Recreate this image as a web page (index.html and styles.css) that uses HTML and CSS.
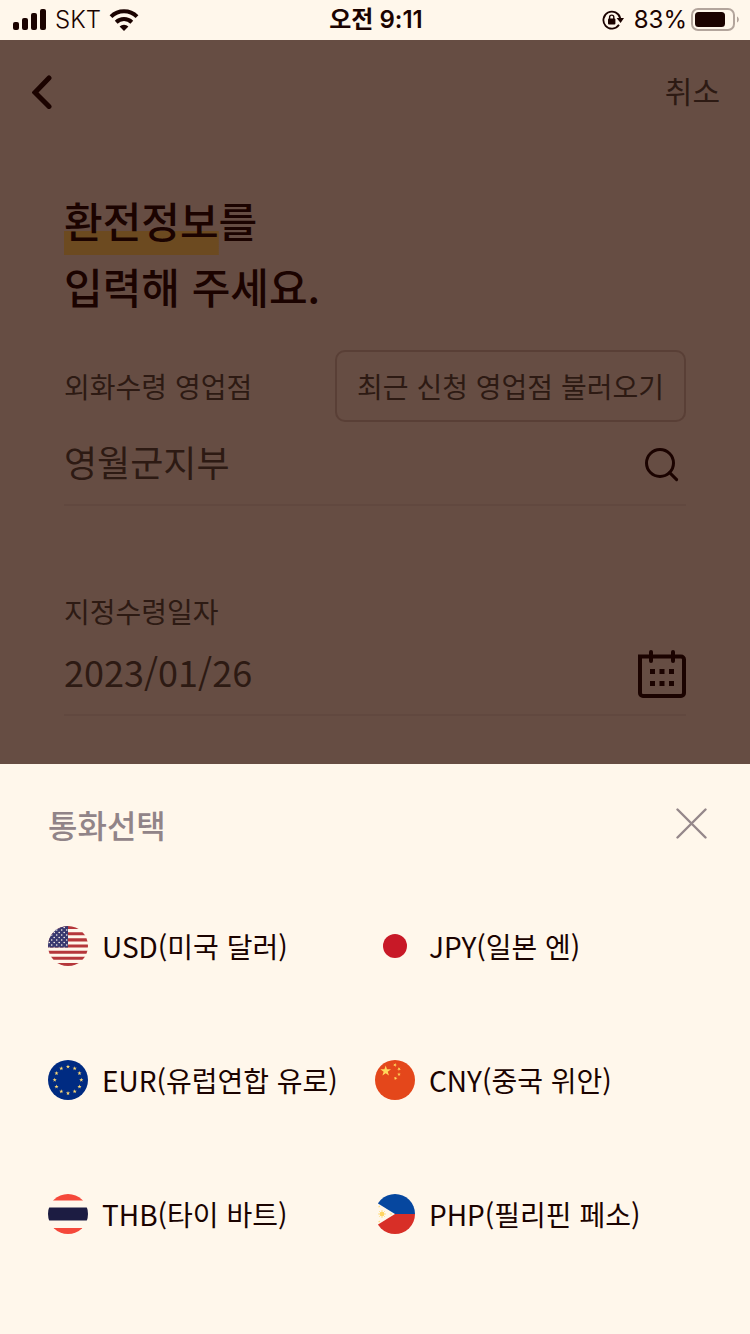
FILE: index.html
```html
<!DOCTYPE html>
<html lang="ko">
<head>
<meta charset="utf-8">
<meta name="viewport" content="width=device-width, initial-scale=1">
<title>환전정보 입력</title>
<link rel="stylesheet" href="styles.css">
</head>
<body>
<div class="status">
  <div class="status-side">
    <svg class="signal" width="34" height="22" viewBox="0 0 34 22" fill="currentColor" aria-hidden="true">
      <rect x="0" y="13" width="6" height="8" rx="2"/><rect x="9" y="9" width="6" height="12" rx="2"/><rect x="18" y="4" width="6" height="17" rx="2"/><rect x="27" y="0" width="6" height="21" rx="2"/>
    </svg>
    <span class="carrier">SKT</span>
    <svg width="30" height="22" viewBox="0 0 30 22" aria-hidden="true">
      <path d="M2 7.600a18.500 18.500 0 0 1 26 0" fill="none" stroke="currentColor" stroke-width="4"/>
      <path d="M7.200 13.200a11.200 11.200 0 0 1 15.600 0" fill="none" stroke="currentColor" stroke-width="4"/>
      <path d="M15 22l-4.400-4.600a6.400 6.400 0 0 1 8.800 0z" fill="currentColor"/>
    </svg>
  </div>
  <div class="clock">오전 9:11</div>
  <div class="status-side status-right">
    <svg width="22" height="20" viewBox="0 0 22 20" aria-hidden="true">
      <path d="M17 14.800a8.500 8.500 0 1 1 1.200-6.600" fill="none" stroke="currentColor" stroke-width="1.800"/>
      <path d="M14.600 8h7.400l-3.400 5z" fill="currentColor"/>
      <rect x="6" y="8.600" width="7.400" height="5.800" rx="1" fill="currentColor"/>
      <path d="M7.600 9V7.200a2.100 2.100 0 0 1 4.200 0V9" fill="none" stroke="currentColor" stroke-width="1.400"/>
    </svg>
    <span class="charge">83%</span>
    <svg width="48" height="24" viewBox="0 0 48 24" aria-hidden="true">
      <rect x="1" y="1" width="42" height="21" rx="6" fill="none" stroke="#b3a59c" stroke-width="2"/>
      <rect x="4" y="4" width="30" height="15" rx="3.500" fill="currentColor"/>
      <path d="M46 8.500c2.400 1 2.400 5 0 6z" fill="#b3a59c"/>
    </svg>
  </div>
</div>

<main class="page">
  <header class="topbar">
    <button class="icon-button" type="button" aria-label="뒤로">
      <svg width="20" height="34" viewBox="0 0 20 34" fill="none" stroke="currentColor" stroke-width="5" stroke-linecap="round"><path d="M17 3L3 17.500 17 31.500"/></svg>
    </button>
    <button class="cancel" type="button">취소</button>
  </header>
  <form class="form">
    <h1 class="title"><span class="mark">환전정보</span>를<br>입력해 주세요.</h1>
    <div class="label-row">
      <label class="label" for="branch">외화수령 영업점</label>
      <button class="recent" type="button">최근 신청 영업점 불러오기</button>
    </div>
    <div class="field">
      <input class="input" id="branch" type="text" value="영월군지부">
      <button class="icon-button" type="button" aria-label="검색">
        <svg width="48" height="48" viewBox="0 0 48 48" fill="none" stroke="currentColor" stroke-width="3" stroke-linecap="round"><circle cx="22" cy="23" r="13.500"/><path d="M31.600 32.600l7 7"/></svg>
      </button>
    </div>
    <label class="label date-label" for="date">지정수령일자</label>
    <div class="field">
      <input class="input" id="date" type="text" value="2023/01/26">
      <button class="icon-button" type="button" aria-label="날짜 선택">
        <svg width="48" height="48" viewBox="0 0 48 48" fill="none" stroke="currentColor" stroke-width="4"><path d="M2 6.500h41a3 3 0 0 1 3 3v33.500a3 3 0 0 1-3 3H5a3 3 0 0 1-3-3z"/><path d="M13 2v9M35 2v9" stroke-linecap="round"/><path d="M12 21.500h24M12 33.500h24" stroke-width="5" stroke-dasharray="5 4.500"/></svg>
      </button>
    </div>
  </form>
</main>

<section class="sheet" role="dialog" aria-labelledby="sheet-title">
  <header class="sheet-head">
    <h2 class="sheet-title" id="sheet-title">통화선택</h2>
    <button class="icon-button close" type="button" aria-label="닫기">
      <svg width="32" height="32" viewBox="0 0 32 32" fill="none" stroke="currentColor" stroke-width="2.400" stroke-linecap="round"><path d="M1.500 1.500l28 28M29.500 1.500l-28 28"/></svg>
    </button>
  </header>
  <div class="currencies">
    <button class="currency" type="button">
      <svg class="flag" viewBox="0 0 40 40" aria-hidden="true">
        <defs>
          <clipPath id="disc"><circle cx="20" cy="20" r="20"/></clipPath>
          <pattern id="dots" width="5" height="5" patternUnits="userSpaceOnUse"><circle cx="1.200" cy="1.500" r=".8" fill="#fff7eb"/><circle cx="3.700" cy="4" r=".8" fill="#fff7eb"/></pattern>
          <path id="star" d="M0-1l.225.690h.726l-.588.427.225.691L0 .382l-.588.426.225-.691-.588-.427h.726z"/>
        </defs>
        <g clip-path="url(#disc)">
          <path fill="#fff7eb" d="M0 0h40v40H0z"/>
          <path stroke="#b5373b" stroke-width="3.100" d="M0 1.500h40M0 7.700h40M0 13.900h40M0 20h40M0 26.200h40M0 32.300h40M0 38.500h40"/>
          <path fill="#38386f" d="M0 0h20v21.500H0z"/><path fill="url(#dots)" d="M0 0h20v21.500H0z"/>
        </g>
      </svg>
      <span>USD(미국 달러)</span>
    </button>
    <button class="currency" type="button">
      <svg class="flag" viewBox="0 0 40 40" aria-hidden="true"><circle cx="20" cy="20" r="12" fill="#c81927"/></svg>
      <span>JPY(일본 엔)</span>
    </button>
    <button class="currency" type="button">
      <svg class="flag" viewBox="0 0 40 40" aria-hidden="true">
        <circle cx="20" cy="20" r="20" fill="#002b82"/>
        <g fill="#ffda72">
          <use href="#star" transform="translate(20 6.700) scale(2.200)"/><use href="#star" transform="translate(26.700 8.500) scale(2.200)"/><use href="#star" transform="translate(31.500 13.300) scale(2.200)"/><use href="#star" transform="translate(33.300 20) scale(2.200)"/><use href="#star" transform="translate(31.500 26.700) scale(2.200)"/><use href="#star" transform="translate(26.700 31.500) scale(2.200)"/><use href="#star" transform="translate(20 33.300) scale(2.200)"/><use href="#star" transform="translate(13.300 31.500) scale(2.200)"/><use href="#star" transform="translate(8.500 26.700) scale(2.200)"/><use href="#star" transform="translate(6.700 20) scale(2.200)"/><use href="#star" transform="translate(8.500 13.300) scale(2.200)"/><use href="#star" transform="translate(13.300 8.500) scale(2.200)"/>
        </g>
      </svg>
      <span>EUR(유럽연합 유로)</span>
    </button>
    <button class="currency" type="button">
      <svg class="flag" viewBox="0 0 40 40" aria-hidden="true">
        <circle cx="20" cy="20" r="20" fill="#e4471b"/>
        <g fill="#ffd85c">
          <use href="#star" transform="translate(10.700 11) scale(5.600)"/><use href="#star" transform="translate(20 5) rotate(20) scale(2)"/><use href="#star" transform="translate(24 9) rotate(40) scale(2)"/><use href="#star" transform="translate(24 14.300) scale(2)"/><use href="#star" transform="translate(20.500 18.300) rotate(20) scale(2)"/>
        </g>
      </svg>
      <span>CNY(중국 위안)</span>
    </button>
    <button class="currency" type="button">
      <svg class="flag" viewBox="0 0 40 40" aria-hidden="true">
        <g clip-path="url(#disc)"><path fill="#f5483a" d="M0 0h40v6.500H0zM0 34h40v6H0z"/><path fill="#1c1c42" d="M0 13.500h40v13H0z"/></g>
      </svg>
      <span>THB(타이 바트)</span>
    </button>
    <button class="currency" type="button">
      <svg class="flag" viewBox="0 0 40 40" aria-hidden="true">
        <g clip-path="url(#disc)"><path fill="#06479f" d="M3 0h37v20H20L3 9.500z"/><path fill="#d82f27" d="M3 40h37V20H20L3 30.500z"/></g>
        <g fill="#ffd561"><circle cx="7" cy="20" r="2.300"/><path stroke="#ffd561" stroke-width=".7" d="M7 16v8M3 20h8M4.200 17.200l5.600 5.600M9.800 17.200l-5.600 5.600"/>
          <use href="#star" transform="translate(4.200 12.500) scale(1.200)"/><use href="#star" transform="translate(4.200 27.500) scale(1.200)"/><use href="#star" transform="translate(16 20) scale(1.200)"/></g>
      </svg>
      <span>PHP(필리핀 페소)</span>
    </button>
  </div>
</section>
</body>
</html>
```
FILE: styles.css
```css
:root {
  --cream: #fff7eb;
  --ink: #1b0300;
  --dim: #664d43;
  --dim-text: #2d1a13;
  --dim-line: #61483f;
}

* {
  box-sizing: border-box;
}

body {
  margin: 0;
  min-height: 100vh;
  display: flex;
  flex-direction: column;
  background: var(--cream);
  color: var(--ink);
  font-family: "Noto Sans CJK KR", sans-serif;
}

button,
input {
  margin: 0;
  padding: 0;
  border: 0;
  background: none;
  color: inherit;
  font: inherit;
}

button {
  cursor: pointer;
}

svg {
  display: block;
  flex: none;
}

/* Status bar */
.status {
  display: grid;
  grid-template-columns: 1fr auto 1fr;
  align-items: center;
  height: 40px;
  padding: 0 11px 0 13px;
  font-family: Inter, "Noto Sans CJK KR", sans-serif;
  font-size: 24px;
  line-height: 40px;
}

.status-side {
  display: flex;
  align-items: center;
  gap: 8px;
}

.status-right {
  justify-content: flex-end;
}

.carrier {
  font-weight: 300;
}

.clock {
  font-weight: 600;
}

.charge {
  margin: 0 -4px 0 2px;
}

/* Dimmed page */
.page {
  flex: 1;
  background: var(--dim);
  padding-bottom: 48px;
}

.topbar {
  display: flex;
  align-items: center;
  justify-content: space-between;
  height: 104px;
  padding: 0 30px 0 32px;
}

.cancel {
  padding-bottom: 4px;
  color: var(--dim-text);
  font-size: 30px;
}

.icon-button {
  flex: none;
}

.form {
  padding: 43px 64px 0;
}

.title {
  margin: 0 0 31px;
  font-size: 42px;
  font-weight: 500;
  line-height: 66px;
}

.mark {
  padding-bottom: 5px;
  background: linear-gradient(#6c4a20, #6c4a20) bottom / 100% 24px no-repeat;
}

.label-row {
  display: flex;
  align-items: center;
  justify-content: space-between;
}

.label {
  color: var(--dim-text);
  font-size: 28px;
  line-height: 42px;
}

.date-label {
  display: block;
  margin-top: 84px;
}

.recent {
  height: 72px;
  padding: 0 20px;
  border: 2px solid #593f36;
  border-radius: 10px;
  color: var(--dim-text);
  font-size: 28px;
}

.field {
  display: flex;
  align-items: center;
  height: 84px;
  padding-top: 2px;
  border-bottom: 2px solid var(--dim-line);
}

.input {
  flex: 1;
  min-width: 0;
  padding-bottom: 6px;
  color: var(--dim-text);
  font-size: 36px;
  outline: none;
}

/* Bottom sheet */
.sheet {
  padding: 36px 42px 100px 48px;
}

.sheet-head {
  display: flex;
  align-items: center;
  justify-content: space-between;
  margin-bottom: 78px;
}

.sheet-title {
  margin: 0;
  color: #918488;
  font-size: 32px;
  font-weight: 500;
  line-height: 48px;
}

.close {
  color: #95878a;
}

.currencies {
  display: grid;
  grid-template-columns: 1fr 1fr;
  row-gap: 94px;
  margin-right: 6px;
}

.currency {
  display: flex;
  align-items: center;
  gap: 14px;
  font-size: 28px;
  line-height: 40px;
  white-space: nowrap;
}

.flag {
  width: 40px;
  height: 40px;
}
```
